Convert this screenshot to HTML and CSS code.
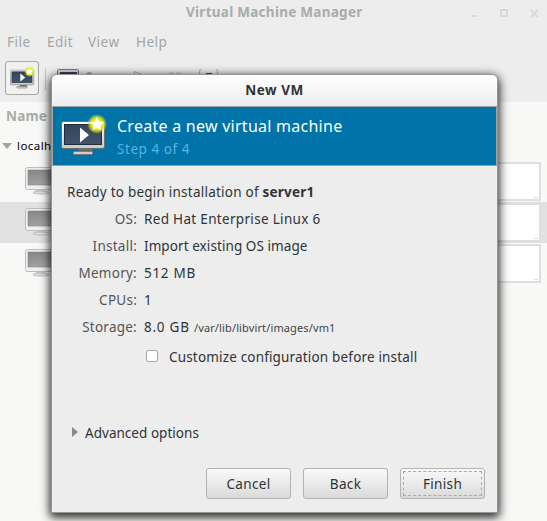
FILE: index.html
```html
<!DOCTYPE html>
<html lang="en">
<head>
<meta charset="utf-8">
<title>Virtual Machine Manager</title>
<link rel="stylesheet" href="styles.css">
</head>
<body>
<svg width="0" height="0" class="defs">
  <defs>
    <linearGradient id="frame" x2="0" y2="1"><stop stop-color="#fff"/><stop offset="1" stop-color="#c8c9c6"/></linearGradient>
    <linearGradient id="screen" x2="0" y2="1"><stop stop-color="#34445b"/><stop offset="1" stop-color="#43536a"/></linearGradient>
    <linearGradient id="gray" x2="0.3" y2="1"><stop stop-color="#858585"/><stop offset="1" stop-color="#a2a2a2"/></linearGradient>
    <radialGradient id="glow"><stop offset=".45" stop-color="#f1f20a"/><stop offset=".7" stop-color="#e2e710" stop-opacity=".8"/><stop offset="1" stop-color="#d8e020" stop-opacity="0"/></radialGradient>
    <symbol id="vm-new" viewBox="0 0 46 42">
      <path d="M18 35h13l1 3H17z" fill="#686b68"/>
      <rect x="12.5" y="37.500" width="19" height="3" rx="1" fill="#cfd0ce" stroke="#777a76"/>
      <rect x=".5" y="7.500" width="43" height="27" rx="2" fill="url(#frame)" stroke="#6d706c"/>
      <rect x="3.500" y="10.500" width="37" height="20" fill="url(#screen)" stroke="#1f2c3d"/>
      <path d="M19 13.500v15l9-7.500z" fill="#fff"/>
      <circle cx="36" cy="10" r="10" fill="url(#glow)"/>
      <path d="M36 3l2.200 4.500 4.800.600-3.500 3.300.9 4.800-4.400-2.300-4.400 2.300.9-4.800-3.500-3.300 4.800-.6z" fill="#fff"/>
    </symbol>
    <symbol id="vm-off" viewBox="0 0 34 29">
      <path d="M11 23h10v3H11z" fill="#c9c9c9"/>
      <ellipse cx="16" cy="25.500" rx="8" ry="1.500" fill="#ddd" stroke="#bdbdbd"/>
      <rect x=".5" y=".5" width="31" height="22" rx="2" fill="#f0f0ee" stroke="#bbbdb9"/>
      <rect x="3" y="3" width="26" height="15" fill="url(#gray)" stroke="#858585" stroke-width=".6"/>
    </symbol>
  </defs>
</svg>
<div class="manager">
  <header class="titlebar">
    <h1>Virtual Machine Manager</h1>
    <svg class="controls" width="70" height="12" viewBox="0 0 70 12" fill="none" stroke="#d8dad8" stroke-width="2">
      <path d="M0 10h6M30 4h6v6h-6zM60 4l7 7M67 4l-7 7"/>
    </svg>
  </header>
  <nav class="menubar"><span>File</span><span>Edit</span><span>View</span><span>Help</span></nav>
  <div class="toolbar">
    <div class="tool"><svg width="25" height="23"><use href="#vm-new"/></svg></div>
    <i class="sep"></i>
    <svg class="tools" width="170" height="20" viewBox="0 0 170 20" fill="none">
      <rect x=".5" y=".5" width="21" height="16" rx="1" fill="#d9dad8" stroke="#777"/>
      <path d="M3 3h17v8H3z" fill="#34445b"/>
      <path d="M30 5q2-2 5 0" stroke="#999" stroke-width="1.500"/>
      <path d="M77.500 2.500v12l12-7z" stroke="#aaa"/>
      <path d="M112.500 4v10h4V4zM119.500 4v10h4V4z" stroke="#bbb"/>
      <rect x="142.500" y="-.500" width="18" height="18" rx="3" fill="#eee" stroke="#aaa"/>
      <path d="M149 5h6" stroke="#444" stroke-width="2"/>
    </svg>
  </div>
  <main class="list">
    <div class="list-head">Name</div>
    <div class="host"><i class="open"></i><span>localhost</span></div>
    <div class="row"><svg width="34" height="29"><use href="#vm-off"/></svg><div class="graph"><i></i></div></div>
    <div class="row selected"><svg width="34" height="29"><use href="#vm-off"/></svg><div class="graph"><i></i></div></div>
    <div class="row"><svg width="34" height="29"><use href="#vm-off"/></svg><div class="graph"><i></i></div></div>
  </main>
</div>
<section class="dialog">
  <h2>New VM</h2>
  <div class="banner">
    <svg width="46" height="42"><use href="#vm-new"/></svg>
    <div class="banner-text"><div class="create">Create a new virtual machine</div><div class="step">Step 4 of 4</div></div>
  </div>
  <div class="body">
    <p class="ready">Ready to begin installation of <b>server1</b></p>
    <dl>
      <dt>OS:</dt><dd class="os">Red Hat Enterprise Linux 6</dd>
      <dt>Install:</dt><dd class="source">Import existing OS image</dd>
      <dt>Memory:</dt><dd class="memory">512 MB</dd>
      <dt>CPUs:</dt><dd>1</dd>
      <dt>Storage:</dt><dd class="storage">8.0 GB <small>/var/lib/libvirt/images/vm1</small></dd>
    </dl>
    <div class="customize"><i class="check"></i><span>Customize configuration before install</span></div>
    <div class="advanced"><i class="arrow"></i><span>Advanced options</span></div>
    <div class="buttons"><button>Cancel</button><button>Back</button><button class="focus">Finish</button></div>
  </div>
</section>
</body>
</html>
```
FILE: styles.css
```css
* { box-sizing: border-box; }
body { margin: 0; width: 547px; height: 521px; overflow: hidden; position: relative; background: #f8f8f6; color: #2e3436; font: 13.5px/20px "Noto Sans", "Open Sans", sans-serif; white-space: nowrap; }
h1, h2, p, dl, dd { margin: 0; }
.defs { position: absolute; }
svg { display: block; flex: none; }
.manager { height: 521px; }
.titlebar { height: 27px; background: #ededed; display: grid; grid-template-columns: 186px 1fr 76px; }
h1 { grid-column: 2; font-size: 13.5px; line-height: 25px; font-weight: 700; color: #a8aca8; letter-spacing: .27px; }
.controls { margin-top: 6px; }
.menubar { height: 33px; background: #ededed; display: grid; grid-template-columns: 40px 41px 48px 60px; padding-left: 7px; line-height: 31px; color: #a3a6a3; letter-spacing: .5px; }
.toolbar { height: 42px; background: #ededed; padding: 1px 5px; display: flex; }
.tool { width: 34px; height: 34px; border: 1px solid #a7a7a7; border-radius: 3px; background: #f1f1f1; padding: 4px; flex: none; }
.sep { width: 1px; height: 22px; background: #c5c5c5; margin: 7px 11px 0 6px; }
.tools { margin-top: 8px; }
.list-head { height: 31px; padding-left: 6px; font-weight: 700; line-height: 28px; color: #a8aca8; letter-spacing: .2px; }
.host { height: 28px; display: flex; align-items: center; padding-left: 2px; font-size: 11.5px; color: #000; }
.host span { margin: -2px 0 0 5px; letter-spacing: .45px; }
.open { border: 5px solid transparent; border-top: 6px solid #a0a3a0; border-bottom: 0; margin-top: -2px; }
.row { height: 41px; padding: 6px 6px 0 25px; display: flex; justify-content: space-between; }
.row + .row { padding-top: 6px; }
.selected { background: #e1e1e1; }
.graph { width: 260px; height: 39px; margin-top: -5px; border: 2px solid #e0dfde; background: #fff; display: flex; justify-content: flex-end; align-items: flex-end; }
.graph i { width: 4px; height: 1px; margin: 0 1px 1px; background: #cfe4ea; }
.dialog { position: absolute; left: 51px; top: 74px; width: 447px; height: 439px; border: 1px solid #969696; border-radius: 6px 6px 0 0; background: #ededed; box-shadow: 0 3px 9px 1px rgba(0,0,0,.75), 0 3px 14px rgba(0,0,0,.3); }
h2 { height: 31px; border-radius: 5px 5px 0 0; background: linear-gradient(#fff, #ededed); text-align: center; font-size: 13.5px; line-height: 30px; letter-spacing: .5px; }
.banner { height: 60px; border: 1px solid #a0a0a0; background: #0073a9; display: flex; padding: 7px 0 0 8px; }
.banner-text { padding-left: 10px; }
.create { color: #fff; font-size: 16px; line-height: 24px; letter-spacing: .26px; }
.step { color: #5bb1e4; line-height: 23px; letter-spacing: .55px; }
.body { padding: 16px 12px 0 15px; }
.ready { height: 24px; letter-spacing: .23px; }
dl { display: grid; grid-template-columns: 70px 1fr; column-gap: 7px; grid-auto-rows: 27px; line-height: 27px; }
dt { text-align: right; color: #555; letter-spacing: .25px; }
.os { letter-spacing: .32px; }
.source { letter-spacing: .08px; }
.memory { letter-spacing: .7px; }
.storage { letter-spacing: .75px; }
small { font-size: 11px; color: #444; letter-spacing: .13px; }
.customize { display: flex; padding: 6px 0 0 79px; letter-spacing: .17px; }
.check { width: 12px; height: 12px; border: 1px solid #a7a99f; border-radius: 2px; background: #fdfdfd; margin: 3px 11px 0 0; }
.advanced { display: flex; padding: 56px 0 0 5px; letter-spacing: .03px; }
.arrow { width: 0; height: 10px; border: 5px solid transparent; border-left: 6px solid #878a87; border-right: 0; margin: 4px 7px 0 0; }
.buttons { display: flex; gap: 12px; justify-content: flex-end; margin-top: 25px; }
button { width: 85px; height: 31px; padding: 0; border: 1px solid #b2b2b2; border-radius: 3px; background: linear-gradient(#fafafa, #dadada); color: #2e3436; font: inherit; letter-spacing: .35px; }
.focus { outline: 1px dashed #aaa; outline-offset: -4px; }
```
